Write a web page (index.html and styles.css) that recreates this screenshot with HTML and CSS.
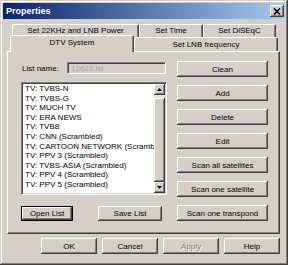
FILE: index.html
```html
<!DOCTYPE html>
<html>
  <head>
    <title>Properties</title>
    <link rel="stylesheet" href="styles.css">
  </head>
  <body>
    <div class="window">
      <div class="titlebar">
        <span class="title">Properties</span>
        <span class="close">
          <svg width="8" height="7" viewBox="0 0 8 7"><path d="M1 0.5 L7 6.5 M7 0.5 L1 6.5" stroke="#000" stroke-width="1.6"/></svg>
        </span>
      </div>
      <div class="content">
        <div class="tab-row back">
          <div class="tab w-22k">Set 22KHz and LNB Power</div>
          <div class="tab w-time">Set Time</div>
          <div class="tab w-diseqc">Set DiSEqC</div>
        </div>
        <div class="tab-row front">
          <div class="tab w-dtv selected">DTV System</div>
          <div class="tab w-lnb">Set LNB frequency</div>
        </div>
        <div class="panel">
          <div class="left">
            <div class="name-row">
              <label>List name:</label>
              <input class="name-input" type="text" value="12629.lst" disabled>
            </div>
            <div class="listbox">
              <ul class="items">
                <li>TV: TVBS-N</li>
                <li>TV: TVBS-G</li>
                <li>TV: MUCH TV</li>
                <li>TV: ERA NEWS</li>
                <li>TV: TVB8</li>
                <li>TV: CNN (Scrambled)</li>
                <li>TV: CARTOON NETWORK (Scrambled)</li>
                <li>TV: PPV 3 (Scrambled)</li>
                <li>TV: TVBS-ASIA (Scrambled)</li>
                <li>TV: PPV 4 (Scrambled)</li>
                <li>TV: PPV 5 (Scrambled)</li>
              </ul>
              <div class="scrollbar">
                <div class="arrow">
                  <svg width="5" height="3" viewBox="0 0 5 3"><path d="M2.5 0 L5 3 L0 3 Z" fill="#000"/></svg>
                </div>
                <div class="track"><div class="thumb"></div></div>
                <div class="arrow">
                  <svg width="5" height="3" viewBox="0 0 5 3"><path d="M0 0 L5 0 L2.5 3 Z" fill="#000"/></svg>
                </div>
              </div>
            </div>
            <div class="list-buttons">
              <button class="btn default open-btn">Open List</button>
              <button class="btn save-btn">Save List</button>
            </div>
          </div>
          <div class="right">
            <button class="btn side-btn">Clean</button>
            <button class="btn side-btn">Add</button>
            <button class="btn side-btn">Delete</button>
            <button class="btn side-btn">Edit</button>
            <button class="btn side-btn">Scan all satellites</button>
            <button class="btn side-btn">Scan one satellite</button>
            <button class="btn side-btn">Scan one transpond</button>
          </div>
        </div>
        <div class="footer">
          <button class="btn foot-btn">OK</button>
          <button class="btn foot-btn">Cancel</button>
          <button class="btn foot-btn disabled">Apply</button>
          <button class="btn foot-btn">Help</button>
        </div>
      </div>
    </div>
  </body>
</html>
```

FILE: styles.css
```css
body {
  margin: 0;
  font-family: "Liberation Sans", Arial, sans-serif;
  font-size: 8px;
  color: #000;
  background: #fff;
}
.window {
  width: 288px;
  height: 265px;
  box-sizing: border-box;
  padding: 3px;
  background: #d4d0c8;
  box-shadow: inset -1px -1px #404040, inset 1px 1px #d4d0c8,
    inset -2px -2px #808080, inset 2px 2px #fff;
}
.titlebar {
  height: 16px;
  display: flex;
  align-items: center;
  justify-content: space-between;
  padding: 0 1px 0 3px;
  background: linear-gradient(to right, #0a246a, #a6caf0);
}
.title {
  color: #fff;
  font-weight: bold;
  font-size: 9px;
}
.close {
  width: 14px;
  height: 12px;
  display: flex;
  align-items: center;
  justify-content: center;
  background: #d4d0c8;
  box-shadow: inset -1px -1px #404040, inset 1px 1px #fff,
    inset -2px -2px #808080;
}
.content {
  padding: 5px 5px 0 4px;
}
.tab-row {
  display: flex;
  align-items: flex-end;
}
.tab-row.back {
  height: 13px;
  padding-left: 5px;
}
.tab-row.front {
  height: 14px;
  padding-left: 3px;
}
.tab {
  box-sizing: border-box;
  height: 100%;
  text-align: center;
  line-height: 12px;
  border-top: 1px solid #fff;
  border-left: 1px solid #fff;
  border-right: 1px solid #404040;
  border-radius: 2px 2px 0 0;
  box-shadow: inset -1px 0 #808080;
  background: #d4d0c8;
}
.tab-row.front .tab {
  line-height: 13px;
}
.tab.selected {
  height: 17px;
  margin-bottom: -1px;
  position: relative;
  z-index: 1;
  line-height: 13px;
}
.w-22k { width: 127px; }
.w-time { width: 64px; }
.w-diseqc { width: 73px; }
.w-dtv { width: 124px; }
.w-lnb { width: 144px; }
.panel {
  height: 183px;
  box-sizing: border-box;
  display: flex;
  padding: 10px 0 0 13px;
  border-top: 1px solid #fff;
  border-left: 1px solid #fff;
  border-right: 1px solid #404040;
  border-bottom: 1px solid #404040;
  box-shadow: inset -1px -1px #808080;
}
.left {
  width: 146px;
}
.name-row {
  display: flex;
  align-items: center;
  height: 12px;
}
.name-row label {
  width: 45px;
  padding-left: 1px;
}
.name-input {
  width: 99px;
  height: 12px;
  box-sizing: border-box;
  margin: 0;
  padding: 0 0 0 3px;
  font: inherit;
  color: #a8a6a0;
  background: #d4d0c8;
  border: 1px solid;
  border-color: #808080 #fff #fff #808080;
  box-shadow: inset 1px 1px #404040;
}
.listbox {
  margin-top: 8px;
  height: 113px;
  box-sizing: border-box;
  display: flex;
  background: #fff;
  border: 1px solid;
  border-color: #808080 #fff #fff #808080;
  box-shadow: inset 1px 1px #404040, inset -1px -1px #d4d0c8;
}
.items {
  flex: 1;
  list-style: none;
  margin: 0;
  padding: 1px 0 0 3px;
  overflow: hidden;
  white-space: nowrap;
  line-height: 9.6px;
}
.scrollbar {
  width: 11px;
  margin: 1px 1px 1px 0;
  display: flex;
  flex-direction: column;
}
.arrow {
  height: 11px;
  display: flex;
  align-items: center;
  justify-content: center;
  background: #d4d0c8;
  box-shadow: inset -1px -1px #404040, inset 1px 1px #fff,
    inset -2px -2px #808080;
}
.track {
  flex: 1;
  background: #e6e3de;
  padding-top: 3px;
  display: flex;
}
.thumb {
  flex: 1;
  background: #d4d0c8;
  box-shadow: inset -1px -1px #404040, inset 1px 1px #fff,
    inset -2px -2px #808080;
}
.btn {
  font: inherit;
  color: #000;
  margin: 0;
  padding: 0;
  border: none;
  background: #d4d0c8;
  box-sizing: border-box;
  box-shadow: inset -1px -1px #404040, inset 1px 1px #fff,
    inset -2px -2px #808080;
}
.btn.default {
  border: 1px solid #000;
}
.btn.disabled {
  color: #808080;
  text-shadow: 1px 1px #fff;
}
.list-buttons {
  display: flex;
  margin-top: 11px;
}
.open-btn {
  width: 52px;
  height: 15px;
}
.save-btn {
  width: 64px;
  height: 15px;
  margin-left: 25px;
}
.right {
  width: 91px;
  margin-left: 10px;
  margin-top: -1px;
  display: flex;
  flex-direction: column;
  gap: 8px;
}
.side-btn {
  height: 16px;
}
.footer {
  display: flex;
  justify-content: flex-end;
  gap: 5px;
  margin-top: 4px;
}
.foot-btn {
  width: 56px;
  height: 16px;
}
```
